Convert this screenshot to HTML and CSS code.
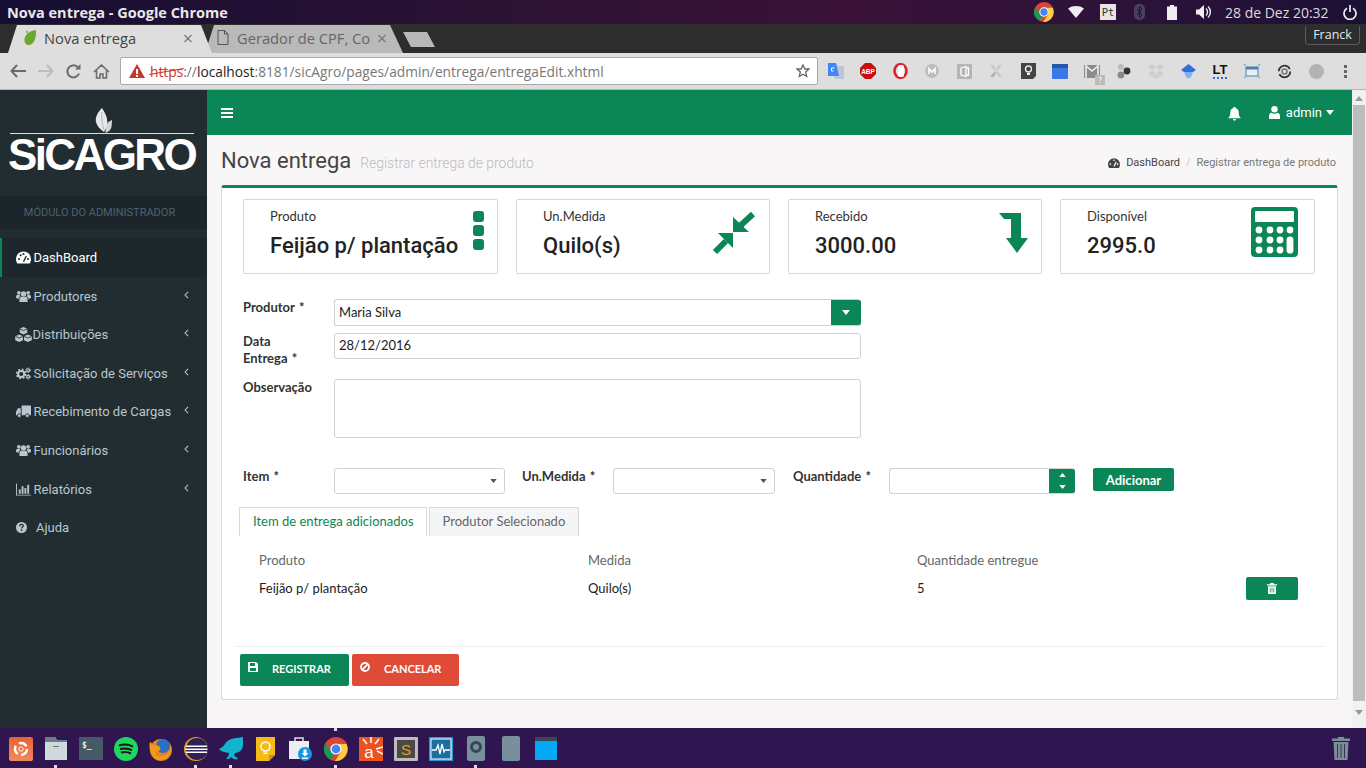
FILE: index.html
```html
<!DOCTYPE html>
<html lang="pt-BR">
<head>
    <meta charset="UTF-8">
    <title>Nova entrega - Google Chrome</title>
    <link rel="stylesheet" href="styles.css">
</head>
<body>
    <svg class="defs" width="0" height="0">
        <defs>
            <symbol id="chrome" viewBox="0 0 24 24">
                <circle cx="12" cy="12" r="12" fill="#db4437"/>
                <path d="M1.600 6 7 15l5 0-5.500 7.600A12 12 0 0 1 1.600 6z" fill="#0f9d58"/>
                <path d="M12 7h10.400A12 12 0 0 1 11 24l6-9z" fill="#ffcd40"/>
                <circle cx="12" cy="12" r="5.600" fill="#fff"/>
                <circle cx="12" cy="12" r="4.400" fill="#4285f4"/>
            </symbol>
            <symbol id="users" viewBox="0 0 16 14">
                <circle cx="8" cy="4.200" r="2.900"/>
                <circle cx="3" cy="3" r="2"/>
                <circle cx="13" cy="3" r="2"/>
                <path d="M3.600 13V9.600C3.600 8 4.800 7.200 6 7.200h4c1.200 0 2.400.8 2.400 2.400V13z"/>
                <path d="M0 8.700V6.700C0 5.700.8 5.300 1.500 5.300h2.300c.3.900.8 1.300 1.200 1.500-1.500.4-2.200 1.500-2.300 2.800zM16 8.700V6.700c0-1-.8-1.400-1.500-1.400h-2.300c-.3.900-.8 1.300-1.200 1.500 1.500.4 2.200 1.500 2.300 2.800z"/>
            </symbol>
            <symbol id="caret" viewBox="0 0 8 5">
                <path d="M0 0h8L4 5z"/>
            </symbol>
            <symbol id="chev" viewBox="0 0 6 10">
                <path d="M5 1 1.200 5 5 9" fill="none" stroke="currentColor" stroke-width="1.300"/>
            </symbol>
        </defs>
    </svg>

    <!-- Barra do Ubuntu -->
    <div class="topbar">
        <span class="win-title">Nova entrega - Google Chrome</span>
        <div class="tray">
            <span class="tc"><svg width="20" height="20"><use href="#chrome"/></svg></span>
            <span class="tc"><svg width="16" height="12" viewBox="0 0 16 12"><path d="M0 2.500C4.500-.8 11.500-.8 16 2.500L8 12z" fill="#eee"/></svg></span>
            <span class="tc"><span class="tray-pt">Pt</span></span>
            <span class="tc"><svg width="12" height="16" viewBox="0 0 12 16"><rect width="11" height="16" rx="5" fill="#4b3f5c"/><path d="M3 5l5 6-2.500 2.500v-11L8 5l-5 6" fill="none" stroke="#1e1430"/></svg></span>
            <span class="tc"><svg width="10" height="15" viewBox="0 0 10 15"><path d="M3 0h4v1.500h3V15H0V1.500h3z" fill="#eee"/></svg></span>
            <span class="tc"><svg width="16" height="14" viewBox="0 0 16 14"><path d="M0 4.500h3L8 0v14L3 9.500H0z" fill="#eee"/><path d="M10 3.500c2 1.800 2 5.200 0 7M12 1.500c3.200 3 3.200 8 0 11" fill="none" stroke="#eee" stroke-width="1.400"/></svg></span>
            <span class="clock">28 de Dez 20:32</span>
            <svg width="14" height="15" viewBox="0 0 14 15"><path d="M4 3.200a6 6 0 1 0 6 0M7 0v7" fill="none" stroke="#eee" stroke-width="1.700"/></svg>
        </div>
    </div>

    <!-- Abas do navegador -->
    <div class="tabstrip">
        <div class="btab btab-on">
            <svg width="15" height="17" viewBox="0 0 15 17"><path d="M13 1C6 2 1 6 1.500 12c.2 2.500 2.500 4.500 5 4 5-1 7-8 6.500-15z" fill="#6aa82e"/><circle cx="4" cy="3" r="1.400" fill="#8cc152"/></svg>
            <span class="btab-name">Nova entrega</span>
            <span class="btab-x">×</span>
        </div>
        <div class="btab btab-off">
            <svg width="12" height="15" viewBox="0 0 12 15"><path d="M1 .5h6.500L11 4v10.500H1zM7.500.5V4H11" fill="none" stroke="#555"/></svg>
            <span class="btab-name">Gerador de CPF, Co</span>
            <span class="btab-x">×</span>
        </div>
        <div class="btab-new"></div>
        <div class="profile">Franck</div>
    </div>

    <!-- Barra de endereco -->
    <div class="toolbar">
        <div class="nav-btns">
            <svg width="16" height="14" viewBox="0 0 16 14"><path d="M7 1 1.500 7 7 13M2 7h14" fill="none" stroke="#6b6b6b" stroke-width="2"/></svg>
            <svg width="16" height="14" viewBox="0 0 16 14"><path d="M9 1l5.500 6L9 13M14 7H0" fill="none" stroke="#bdbdbd" stroke-width="2"/></svg>
            <svg width="15" height="15" viewBox="0 0 15 15"><path d="M13 9.500A6 6 0 1 1 11.500 3" fill="none" stroke="#6b6b6b" stroke-width="2"/><path d="M9 5.500h5.500V0z" fill="#6b6b6b"/></svg>
            <svg width="17" height="15" viewBox="0 0 17 15"><path d="M1 8l7.500-7L16 8M3.500 6.500V14H7v-4h3v4h3.500V6.500" fill="none" stroke="#6b6b6b" stroke-width="1.600"/></svg>
        </div>
        <div class="omnibox">
            <svg width="16" height="14" viewBox="0 0 16 14"><path d="M8 0l8 14H0z" fill="#c5372c"/><path d="M7 5h2v5H7zM7 11h2v2H7z" fill="#fff"/></svg>
            <span class="url"><span class="url-https">https</span><span class="url-dim">://</span>localhost<span class="url-dim">:8181/sicAgro/pages/admin/entrega/entregaEdit.xhtml</span></span>
            <svg class="star" width="14" height="14" viewBox="0 0 14 14"><path d="M7 1l1.800 4H13L9.700 8l1 4.500L7 10.200 3.300 12.500l1-4.500L1 5h4.200z" fill="none" stroke="#666" stroke-width="1.300"/></svg>
        </div>
        <div class="exts">
            <span class="ext"><svg width="16" height="16" viewBox="0 0 16 16"><path d="M0 0h8l2 3h6v13H7l-1-3H0z" fill="#bcc6d6"/><path d="M0 0h8l3 13H0z" fill="#4285f4"/><path d="M6.500 5H3.500v3h2" fill="none" stroke="#fff"/></svg></span>
            <span class="ext"><svg width="16" height="16" viewBox="0 0 16 16"><path d="M5 0h6l5 5v6l-5 5H5l-5-5V5z" fill="#c70d0d"/><text x="8" y="10.500" class="ext-abp">ABP</text></svg></span>
            <span class="ext"><svg width="15" height="16" viewBox="0 0 15 16"><ellipse cx="7.500" cy="8" rx="6" ry="6.800" fill="none" stroke="#e2202c" stroke-width="2.600"/><rect x="5" y="2" width="6" height="12" rx="2" fill="#fff"/></svg></span>
            <span class="ext"><svg width="14" height="14" viewBox="0 0 14 14"><circle cx="7" cy="7" r="7" fill="#bdbdbd"/><path d="M4 10V4.500L7 8l3-3.500V10" fill="none" stroke="#fff" stroke-width="1.500"/></svg></span>
            <span class="ext"><svg width="15" height="15" viewBox="0 0 15 15"><rect width="15" height="15" fill="#b5b5b5"/><path d="M4 4l5-1.500v10L4 11zM9 4h2.500v7H9" fill="none" stroke="#fff" stroke-width="1.300"/></svg></span>
            <span class="ext"><svg width="14" height="14" viewBox="0 0 14 14"><path d="M1 1h3.500l9 12H10zM13 1H9.500L6 5.500 8 8z" fill="#c9c9c9"/><path d="M1 13h3.500L7 9.500 5.500 7.500z" fill="#b0b0b0"/></svg></span>
            <span class="ext"><svg width="15" height="16" viewBox="0 0 15 16"><path d="M0 0h15v13l-3 3H0z" fill="#444"/><circle cx="7.500" cy="6" r="3" fill="none" stroke="#eee" stroke-width="1.300"/><path d="M6 10h3v2H6z" fill="#eee"/></svg></span>
            <span class="ext"><svg width="16" height="15" viewBox="0 0 16 15"><rect width="16" height="15" rx="1" fill="#3b78e7"/><rect width="16" height="4" fill="#2a56a8"/></svg></span>
            <span class="ext ext-mail"><svg width="16" height="13" viewBox="0 0 16 13"><rect width="16" height="13" fill="#8b8b8b"/><path d="M2 0v13M14 0v13M2 1l6 5 6-5" fill="none" stroke="#f2f2f2" stroke-width="1.500"/></svg><span class="ext-q">?</span></span>
            <span class="ext"><svg width="14" height="15" viewBox="0 0 14 15"><circle cx="4" cy="3" r="3" fill="#bbb"/><circle cx="4" cy="11" r="3.400" fill="#888"/><circle cx="10" cy="7" r="3.400" fill="#333"/></svg></span>
            <span class="ext"><svg width="16" height="15" viewBox="0 0 16 15"><path d="M4 0 8 3 4 6 0 3zM12 0l4 3-4 3-4-3zM4 6.500l4 3-4 3-4-3zM12 6.500l4 3-4 3-4-3zM4 13l4-2.500 4 2.500-4 2z" fill="#cdcdcd"/></svg></span>
            <span class="ext"><svg width="15" height="15" viewBox="0 0 15 15"><path d="M7.500 0 15 6l-3 2H3L0 6z" fill="#2f6fd8"/><path d="M3 8h9l-2 5-2.500 1.500L5 13z" fill="#7fb1f0"/></svg></span>
            <span class="ext ext-lt">LT<i class="ext-wave"></i></span>
            <span class="ext"><svg width="16" height="14" viewBox="0 0 16 14"><rect x="2" y="3" width="12" height="9" fill="#e8eef6" stroke="#4a7fb5"/><rect x="2" y="3" width="12" height="2.500" fill="#4a7fb5"/><path d="M0 2V0h2M14 0h2v2M0 12v2h2M14 14h2v-2" fill="none" stroke="#4a90d0"/></svg></span>
            <span class="ext"><svg width="15" height="15" viewBox="0 0 15 15"><circle cx="7.500" cy="7.500" r="5.800" fill="none" stroke="#333" stroke-width="1.800" stroke-dasharray="15 3"/><circle cx="7.500" cy="7.500" r="2.500" fill="none" stroke="#777" stroke-width="1.500"/></svg></span>
            <span class="ext"><svg width="15" height="15" viewBox="0 0 15 15"><circle cx="7.500" cy="7.500" r="7.500" fill="#b3b3b3"/></svg></span>
            <span class="ext-dots"><i></i><i></i><i></i></span>
        </div>
    </div>

    <!-- Aplicacao -->
    <div class="app">
        <aside class="sidebar">
            <div class="logo">
                <svg class="logo-leaf" width="18" height="25" viewBox="0 0 18 25">
                    <path d="M7 0C3 4 0 9 1 14c.8 4 4 7 8 10 3-4 4-9 3-13C11.300 7 9 3 7 0z" fill="#e8e8e8"/>
                    <path d="M7 4C6 9 7 16 9 22" fill="none" stroke="#aaa" stroke-width=".8"/>
                    <path d="M17 12c-3 1-5 3-6 6l-.5 7c3-1 5.500-3 6-6 .3-2.500.5-5 .5-7z" fill="#d4d4d4"/>
                </svg>
                <div class="logo-line"></div>
                <div class="logo-name">SiCAGRO</div>
            </div>
            <div class="side-head">MÓDULO DO ADMINISTRADOR</div>
            <ul class="menu">
                <li class="menu-item is-active">
                    <svg class="mi" viewBox="0 0 16 13"><path d="M8 0a8 8 0 0 0-8 8c0 1.800.5 3.500 1.400 5h13.200c.9-1.500 1.400-3.200 1.400-5a8 8 0 0 0-8-8z" fill="#fff"/><circle cx="3.200" cy="8" r="1.100" fill="#1e282c"/><circle cx="5" cy="4.200" r="1.100" fill="#1e282c"/><circle cx="8" cy="2.800" r="1.100" fill="#1e282c"/><circle cx="12.800" cy="8" r="1.100" fill="#1e282c"/><path d="M8 11l3-6" stroke="#1e282c" stroke-width="1.500"/></svg>
                    <span>DashBoard</span>
                </li>
                <li class="menu-item">
                    <svg class="mi"><use href="#users"/></svg>
                    <span>Produtores</span>
                    <svg class="chev"><use href="#chev"/></svg>
                </li>
                <li class="menu-item">
                    <svg class="mi mi-cubes" viewBox="0 0 16 14"><path d="M8 0l3.500 1.500v3.800L8 7 4.500 5.300V1.500zM4 7l3.500 1.600v3.800L4 14 .2 12.400V8.600zM12 7l3.800 1.600v3.800L12 14l-3.500-1.600V8.600z"/><path d="M4.500 1.800 8 3.300l3.500-1.500M.5 8.800 4 10.300l3.500-1.500M8.500 8.800l3.500 1.500 3.500-1.500" fill="none" stroke="#222d32" stroke-width=".8"/></svg>
                    <span>Distribuições</span>
                    <svg class="chev"><use href="#chev"/></svg>
                </li>
                <li class="menu-item">
                    <svg class="mi" viewBox="0 0 16 14"><circle cx="5.500" cy="7.500" r="3.300" fill="none" stroke="currentColor" stroke-width="2.200"/><circle cx="5.500" cy="7.500" r="4.900" fill="none" stroke="currentColor" stroke-width="1.800" stroke-dasharray="2 1.850"/><circle cx="13" cy="3.500" r="1.500" fill="none" stroke="currentColor" stroke-width="1.300"/><circle cx="13" cy="3.500" r="2.500" fill="none" stroke="currentColor" stroke-width="1" stroke-dasharray="1.300 1.300"/><circle cx="13" cy="10.500" r="1.500" fill="none" stroke="currentColor" stroke-width="1.300"/><circle cx="13" cy="10.500" r="2.500" fill="none" stroke="currentColor" stroke-width="1" stroke-dasharray="1.300 1.300"/></svg>
                    <span>Solicitação de Serviços</span>
                    <svg class="chev"><use href="#chev"/></svg>
                </li>
                <li class="menu-item">
                    <svg class="mi" viewBox="0 0 16 13"><path d="M6 0h10v10.500H6zM5 3v7.500H0V7l2-4z"/><circle cx="3.500" cy="11" r="2" stroke="#222d32"/><circle cx="12" cy="11" r="2" stroke="#222d32"/></svg>
                    <span>Recebimento de Cargas</span>
                    <svg class="chev"><use href="#chev"/></svg>
                </li>
                <li class="menu-item">
                    <svg class="mi"><use href="#users"/></svg>
                    <span>Funcionários</span>
                    <svg class="chev"><use href="#chev"/></svg>
                </li>
                <li class="menu-item">
                    <svg class="mi" viewBox="0 0 16 13"><path d="M0 0h1v12h15v1H0z"/><path d="M3 6.500h2V11H3zM6 3h2v8H6zM9 5h2v6H9zM12 1.500h2V11h-2z"/></svg>
                    <span>Relatórios</span>
                    <svg class="chev"><use href="#chev"/></svg>
                </li>
                <li class="menu-item menu-help">
                    <svg class="mi mi-help" viewBox="0 0 12 12"><circle cx="6" cy="6" r="6"/><path d="M4 4.500C4 3 5 2.500 6 2.500s2 .6 2 1.800C8 5.500 6.100 5.500 6.100 7" fill="none" stroke="#222d32" stroke-width="1.400"/><path d="M5.200 8.100h1.700v1.600H5.200z" fill="#222d32"/></svg>
                    <span>Ajuda</span>
                </li>
            </ul>
        </aside>

        <main class="main">
            <header class="appbar">
                <svg class="burger" width="12" height="10" viewBox="0 0 12 10"><path d="M0 0h12v2H0zM0 4h12v2H0zM0 8h12v2H0z" fill="#fff"/></svg>
                <div class="appbar-right">
                    <svg class="bell" width="13" height="14" viewBox="0 0 13 14"><path d="M6.500 0C8 0 8 1 8 1.300c2 .6 2.700 2.300 2.700 4.200 0 3 .8 4.500 2.300 5.800H0c1.500-1.300 2.300-2.800 2.300-5.800 0-1.900.7-3.600 2.700-4.200C5 1 5 0 6.500 0zM5 12h3a1.500 1.800 0 0 1-3 0z" fill="#fff"/></svg>
                    <div class="user">
                        <svg width="11" height="13" viewBox="0 0 11 13"><circle cx="5.500" cy="3.200" r="3.200" fill="#fff"/><path d="M0 13v-3c0-2 1.200-3.300 2.500-3.300 1 .7 2 1 3 1s2-.3 3-1C9.800 6.700 11 8 11 10v3z" fill="#fff"/></svg>
                        <span>admin</span>
                        <svg class="user-caret" width="8" height="5"><use href="#caret"/></svg>
                    </div>
                </div>
            </header>

            <div class="page">
                <div class="page-head">
                    <h1>Nova entrega</h1>
                    <small>Registrar entrega de produto</small>
                    <div class="crumbs">
                        <svg width="12" height="10" viewBox="0 0 16 13"><path d="M8 0a8 8 0 0 0-8 8c0 1.800.5 3.500 1.400 5h13.200c.9-1.500 1.400-3.200 1.400-5a8 8 0 0 0-8-8z" fill="#444"/><circle cx="3.200" cy="8" r="1.100" fill="#f9f6f8"/><circle cx="8" cy="2.800" r="1.100" fill="#f9f6f8"/><circle cx="12.800" cy="8" r="1.100" fill="#f9f6f8"/><path d="M8 11l3-6" stroke="#f9f6f8" stroke-width="1.500"/></svg>
                        <span class="crumb-link">DashBoard</span>
                        <span class="crumb-sep">/</span>
                        <span class="crumb-now">Registrar entrega de produto</span>
                    </div>
                </div>

                <section class="box">
                    <div class="infos">
                        <div class="info">
                            <div class="info-text"><div class="info-label">Produto</div><div class="info-value">Feijão p/ plantação</div></div>
                            <svg class="info-dots" width="11" height="39" viewBox="0 0 11 39"><rect width="11" height="11" rx="3"/><rect y="14" width="11" height="11" rx="3"/><rect y="28" width="11" height="11" rx="3"/></svg>
                        </div>
                        <div class="info">
                            <div class="info-text"><div class="info-label">Un.Medida</div><div class="info-value">Quilo(s)</div></div>
                            <svg class="info-ic" width="44" height="44" viewBox="0 0 44 44"><path d="M21 6v15h16zM6 22h15v15z"/><path d="M28 15 41 3M14 30 3 41" stroke="#0b8656" stroke-width="6"/></svg>
                        </div>
                        <div class="info">
                            <div class="info-text"><div class="info-label">Recebido</div><div class="info-value">3000.00</div></div>
                            <svg class="info-ic info-down" width="30" height="40" viewBox="0 0 30 40"><path d="M0 0h22v25h7L18 40 7 25h5V6H5z"/></svg>
                        </div>
                        <div class="info">
                            <div class="info-text"><div class="info-label">Disponível</div><div class="info-value">2995.0</div></div>
                            <svg class="info-ic info-calc" width="47" height="50" viewBox="0 0 47 50">
                                <rect width="47" height="50" rx="4"/>
                                <rect x="4" y="4" width="39" height="11" rx="1" fill="#fff"/>
                                <g fill="#fff">
                                    <circle cx="8" cy="23" r="3.400"/><circle cx="19" cy="23" r="3.400"/><circle cx="29" cy="23" r="3.400"/><circle cx="39" cy="23" r="3.400"/>
                                    <circle cx="8" cy="33" r="3.400"/><circle cx="19" cy="33" r="3.400"/><circle cx="29" cy="33" r="3.400"/>
                                    <circle cx="8" cy="43" r="3.400"/><circle cx="19" cy="43" r="3.400"/><circle cx="29" cy="43" r="3.400"/>
                                    <rect x="35.600" y="29.600" width="6.800" height="17" rx="3.400"/>
                                </g>
                            </svg>
                        </div>
                    </div>

                    <div class="row row-produtor">
                        <label class="lbl">Produtor &nbsp;*</label>
                        <div class="combo">
                            <span class="combo-text">Maria Silva</span>
                            <span class="combo-btn"><svg width="8" height="5"><use href="#caret"/></svg></span>
                        </div>
                    </div>
                    <div class="row row-data">
                        <label class="lbl">Data<br>Entrega &nbsp;*</label>
                        <input class="field" type="text" value="28/12/2016">
                    </div>
                    <div class="row row-obs">
                        <label class="lbl">Observação</label>
                        <textarea class="field field-area"></textarea>
                    </div>

                    <div class="row row-item">
                        <label class="lbl lbl-item">Item &nbsp;*</label>
                        <div class="sel sel-item"><svg width="7" height="4"><use href="#caret"/></svg></div>
                        <label class="lbl lbl-un">Un.Medida &nbsp;*</label>
                        <div class="sel sel-un"><svg width="7" height="4"><use href="#caret"/></svg></div>
                        <label class="lbl lbl-qtd">Quantidade &nbsp;*</label>
                        <div class="spin">
                            <div class="spin-btn">
                                <svg width="7" height="4" class="flip"><use href="#caret"/></svg>
                                <svg width="7" height="4"><use href="#caret"/></svg>
                            </div>
                        </div>
                        <button class="btn-add">Adicionar</button>
                    </div>

                    <div class="tabs">
                        <div class="tab tab-on">Item de entrega adicionados</div>
                        <div class="tab">Produtor Selecionado</div>
                    </div>
                    <table class="items">
                        <thead>
                            <tr><th>Produto</th><th>Medida</th><th>Quantidade entregue</th><th></th></tr>
                        </thead>
                        <tbody>
                            <tr>
                                <td>Feijão p/ plantação</td>
                                <td>Quilo(s)</td>
                                <td>5</td>
                                <td>
                                    <button class="btn-del"><svg width="10" height="11" viewBox="0 0 10 11"><path d="M3.500 0h3l.7 1.200H10v1.300H0V1.200h2.800zM1 3.200h8V10c0 .6-.4 1-1 1H2c-.6 0-1-.4-1-1z" fill="#fff"/><path d="M3.200 4.500v5M5 4.500v5M6.800 4.500v5" stroke="#0b8656" stroke-width=".7"/></svg></button>
                                </td>
                            </tr>
                        </tbody>
                    </table>

                    <div class="actions">
                        <button class="act act-save">
                            <svg width="10" height="10" viewBox="0 0 10 10"><path d="M0 0h8l2 2v8H0zM2 1v3h5V1zM2 6v3h6V6z" fill="#fff" fill-rule="evenodd"/></svg>
                            REGISTRAR
                        </button>
                        <button class="act act-cancel">
                            <svg width="10" height="10" viewBox="0 0 10 10"><circle cx="5" cy="5" r="4" fill="none" stroke="#fff" stroke-width="1.800"/><path d="M2.200 7.800l5.600-5.600" stroke="#fff" stroke-width="1.800"/></svg>
                            CANCELAR
                        </button>
                    </div>
                </section>
            </div>
        </main>

        <div class="scrollbar">
            <svg width="8" height="5" class="sb-up"><use href="#caret"/></svg>
            <div class="sb-thumb"></div>
            <svg width="8" height="5"><use href="#caret"/></svg>
        </div>
    </div>

    <!-- Lancador do Ubuntu -->
    <div class="dock">
        <span class="dk"><svg width="24" height="24" viewBox="0 0 24 24"><defs><linearGradient id="ubu" x1="0" y1="0" x2="0" y2="1"><stop offset="0" stop-color="#e8622f"/><stop offset="1" stop-color="#f08a5d"/></linearGradient></defs><rect width="24" height="24" rx="2" fill="url(#ubu)"/><circle cx="12" cy="12" r="6" fill="none" stroke="#fff" stroke-width="2.400" stroke-dasharray="9 3.600"/><circle cx="12" cy="12" r="2.200" fill="none" stroke="#fff"/></svg></span>
        <span class="dk dk-run"><svg width="24" height="23" viewBox="0 0 24 23"><path d="M1 0h10l2 3h10v20H1z" fill="#cfd8dc"/><path d="M1 0h10l2 3h10v2H1z" fill="#6b7c85"/><path d="M9 9h6v1H9z" fill="#607d8b"/></svg></span>
        <span class="dk"><svg width="24" height="23" viewBox="0 0 24 23"><rect width="24" height="23" rx="1" fill="#455a64"/><text x="3" y="11" class="dk-term">$_</text></svg></span>
        <span class="dk"><svg width="24" height="24" viewBox="0 0 24 24"><circle cx="12" cy="12" r="12" fill="#1ed760"/><path d="M5 8.500c5-1.500 10-1 14 1.200M6 12c4-1 8.500-.7 12 1.200M7 15.500c3.500-.8 7-.5 10 1" fill="none" stroke="#16181a" stroke-width="2"/></svg></span>
        <span class="dk"><svg width="24" height="24" viewBox="0 0 24 24"><circle cx="12" cy="13" r="11" fill="#e8831f"/><circle cx="14" cy="9" r="7" fill="#2a6fc4"/><path d="M1 5c2 1 3 2 3 4 2-1 5-1 7 1 1 2 0 4-2 4-3 0-4 3-1 5 3 1 8 1 12-4 1-2 2-6 1-8 2 6 0 15-9 16C3 24-1 12 1 5z" fill="#f39a1d"/></svg></span>
        <span class="dk dk-run"><svg width="24" height="24" viewBox="0 0 24 24"><circle cx="12" cy="12" r="12" fill="#e89b1c"/><circle cx="13" cy="12" r="11" fill="#2c2255"/><path d="M2 8.500h21v1.500H2zM1.500 11.500h22V13h-22zM2 14.500h21V16H2z" fill="#fff"/></svg></span>
        <span class="dk dk-run"><svg width="24" height="23" viewBox="0 0 24 23"><path d="M24 0v8c0 5-4 8-8 8l-1 3c2 0 3 2 4 3-3 1-5 0-7-2-1 2-3 2-5 2 1-1 3-3 3-6C6 15 2 15 0 12c2-1 4-2 6-5 2-4 8-6 12-6z" fill="#12b5cb"/></svg></span>
        <span class="dk"><svg width="19" height="24" viewBox="0 0 19 24"><path d="M0 0h19v18l-6 6H0z" fill="#f5ba15"/><path d="M19 18h-6v6z" fill="#c79412"/><circle cx="9.500" cy="9.500" r="4.500" fill="none" stroke="#fff" stroke-width="1.500"/><path d="M7.500 15.500h4v1.500h-4z" fill="#fff"/></svg></span>
        <span class="dk"><svg width="24" height="24" viewBox="0 0 24 24"><path d="M0 4h20v18H0z" fill="#eceff1"/><path d="M6 4V1h8v3" fill="none" stroke="#ddd" stroke-width="1.500"/><circle cx="16" cy="17" r="7" fill="#1596e4"/><path d="M14.500 12.500h3V16h2L16 19.500 12.500 16h2zM13 20.500h6V22h-6z" fill="#fff"/></svg></span>
        <span class="dk dk-run dk-top"><svg width="24" height="24"><use href="#chrome"/></svg></span>
        <span class="dk"><svg width="24" height="24" viewBox="0 0 24 24"><rect width="24" height="24" fill="#e95420"/><text x="10" y="21" class="dk-a">a</text><path d="M12 0v6M4 2l4 5M20 2l-4 5M24 10l-7 2M24 17l-6-3" stroke="#fff" stroke-width="1.500"/></svg></span>
        <span class="dk"><svg width="24" height="24" viewBox="0 0 24 24"><rect width="24" height="24" rx="1" fill="#bdbdbd"/><rect x="3" y="3" width="18" height="18" fill="#4a4a4a"/><text x="12" y="18" class="dk-s">S</text></svg></span>
        <span class="dk"><svg width="24" height="24" viewBox="0 0 24 24"><rect width="24" height="24" fill="#1f9ad6"/><rect x="2" y="2" width="20" height="20" fill="#1b6f9c" stroke="#fff"/><path d="M3 13h4l2-5 2 9 2-10 2 8 1-2h5" fill="none" stroke="#fff" stroke-width="1.300"/></svg></span>
        <span class="dk dk-run"><svg width="18" height="25" viewBox="0 0 18 25"><rect width="18" height="25" rx="2" fill="#78909c"/><circle cx="9" cy="11" r="4.500" fill="none" stroke="#37474f" stroke-width="3"/></svg></span>
        <span class="dk"><svg width="18" height="25" viewBox="0 0 18 25"><rect width="18" height="25" rx="2" fill="#78909c"/></svg></span>
        <span class="dk"><svg width="22" height="23" viewBox="0 0 22 23"><rect width="22" height="23" fill="#03a9f4"/><rect width="22" height="4" fill="#37474f"/></svg></span>
        <span class="dk dk-trash"><svg width="18" height="23" viewBox="0 0 18 23"><path d="M6 0h6v1.500h6V4H0V1.500h6zM1.500 5h15l-1 18H2.500z" fill="#7b8d96"/><path d="M5.500 7v14M9 7v14M12.500 7v14" stroke="#2f1650" stroke-width=".8"/></svg></span>
    </div>
</body>
</html>
```

FILE: styles.css
```css
* {
    box-sizing: border-box;
}
html, body {
    height: 100%;
    margin: 0;
    overflow: hidden;
}
body {
    display: flex;
    flex-direction: column;
    width: 1366px;
    height: 768px;
    font-family: Lato, sans-serif;
    font-size: 13px;
    color: #222;
}
.defs {
    position: absolute;
}

/* Ubuntu top bar */
.topbar {
    display: flex;
    align-items: center;
    justify-content: space-between;
    flex: 0 0 24px;
    padding: 0 9px 0 7px;
    background: linear-gradient(90deg, #170e33 0%, #2a1233 35%, #3b1238 62%, #2a1238 85%, #1c1035 100%);
    color: #e8e8e8;
}
.win-title {
    font-family: "Open Sans", sans-serif;
    font-size: 14.500px;
    font-weight: 700;
}
.tray {
    display: flex;
    align-items: center;
}
.tc {
    display: flex;
    align-items: center;
    justify-content: center;
    width: 32px;
}
.tray-pt {
    width: 16px;
    height: 16px;
    background: #e6e6e6;
    color: #333;
    font-family: "DejaVu Sans Mono", monospace;
    font-size: 10.500px;
    line-height: 16px;
    text-align: center;
}
.clock {
    width: 104px;
    margin: 0 14px 0 5px;
    font-family: "Open Sans", sans-serif;
    font-size: 14px;
    color: #dcdcdc;
    white-space: nowrap;
}

/* Chrome tabs */
.tabstrip {
    display: flex;
    align-items: flex-end;
    flex: 0 0 29px;
    padding-left: 8px;
    background: #2d2d2d;
}
.btab {
    display: flex;
    align-items: center;
    height: 28px;
    padding-bottom: 3px;
    font-family: "Open Sans", sans-serif;
    font-size: 14.700px;
}
.btab-on {
    position: relative;
    z-index: 1;
    width: 204px;
    margin-right: -7px;
    padding-left: 15px;
    padding-right: 19px;
    background: #dedede;
    color: #444;
    clip-path: polygon(0 100%, 9px 0, 193px 0, 100% 100%);
}
.btab-off {
    width: 198px;
    padding-left: 12px;
    padding-right: 16px;
    background: #b9b9b9;
    color: #666;
    clip-path: polygon(0 100%, 9px 0, 185px 0, 100% 100%);
}
.btab-name {
    flex: 1;
    margin-left: 6px;
    overflow: hidden;
    white-space: nowrap;
}
.btab-off .btab-name {
    margin-left: 8px;
}
.btab-x {
    font-size: 18px;
    line-height: 1;
    color: #777;
}
.btab-new {
    width: 32px;
    height: 15px;
    margin: 0 0 6px 0;
    background: #b8b8b8;
    clip-path: polygon(0 0, 24px 0, 100% 100%, 8px 100%);
}
.profile {
    align-self: flex-start;
    width: 55px;
    height: 19px;
    margin: 2px 6px 0 auto;
    border: 1px solid #5c5c5c;
    border-top: none;
    border-radius: 0 0 4px 4px;
    color: #e8e8e8;
    font-family: "Open Sans", sans-serif;
    font-size: 12.500px;
    line-height: 18px;
    text-align: center;
}

/* Chrome toolbar */
.toolbar {
    display: flex;
    align-items: center;
    flex: 0 0 37px;
    border-bottom: 1px solid #b5b5b5;
    background: #dedede;
}
.nav-btns {
    display: flex;
    align-items: center;
    gap: 12px;
    width: 120px;
    padding-left: 10px;
}
.omnibox {
    display: flex;
    align-items: center;
    width: 698px;
    height: 28px;
    padding: 0 7px 0 8px;
    border: 1px solid #a9a9a9;
    border-radius: 2px;
    background: #fff;
}
.url {
    flex: 1;
    margin-left: 5px;
    font-family: "Open Sans", sans-serif;
    font-size: 13.750px;
    color: #222;
    white-space: nowrap;
}
.url-https {
    position: relative;
    color: #c5372c;
}
.url-https::after {
    content: "";
    position: absolute;
    top: 50%;
    left: -1px;
    right: -1px;
    height: 1px;
    background: #c5372c;
    transform: rotate(-10deg);
}
.url-dim {
    color: #777;
}
.exts {
    display: flex;
    align-items: center;
    flex: 1;
    padding-left: 2px;
}
.ext {
    display: flex;
    align-items: center;
    justify-content: center;
    position: relative;
    width: 32px;
    height: 24px;
}
.ext-abp {
    fill: #fff;
    font-family: "Liberation Sans", sans-serif;
    font-size: 6.500px;
    font-weight: 700;
    text-anchor: middle;
}
.ext-q {
    position: absolute;
    right: 3px;
    bottom: -2px;
    width: 10px;
    height: 10px;
    background: #bbb;
    color: #fff;
    font-size: 8px;
    line-height: 10px;
    text-align: center;
}
.ext-lt {
    flex-direction: column;
    color: #111;
    font-family: "Liberation Sans", sans-serif;
    font-size: 13px;
    font-weight: 700;
    line-height: 12px;
}
.ext-wave {
    width: 14px;
    height: 3px;
    border-bottom: 2px dotted #2a6fd8;
}
.ext-dots {
    display: flex;
    flex-direction: column;
    gap: 2px;
    margin-left: 12px;
}
.ext-dots i {
    width: 3px;
    height: 3px;
    background: #666;
}

/* App shell */
.app {
    display: flex;
    flex: 0 0 638px;
    background: #f9f6f8;
}
.sidebar {
    flex: 0 0 207px;
    background: #222d32;
    color: #b8c7ce;
    font-family: Roboto, sans-serif;
}
.logo {
    display: flex;
    flex-direction: column;
    align-items: center;
    height: 106px;
    padding-top: 18px;
}
.logo-line {
    width: 184px;
    height: 1px;
    margin-left: -3px;
    background: #ddd;
}
.logo-name {
    align-self: flex-start;
    width: 186px;
    margin: 3px 0 0 8px;
    color: #fff;
    font-family: "Liberation Sans", sans-serif;
    font-size: 44px;
    font-weight: 700;
    letter-spacing: -2.600px;
    line-height: 36px;
    white-space: nowrap;
}
.side-head {
    height: 33px;
    padding-right: 8px;
    background: #1c2529;
    color: #4b6170;
    font-size: 11px;
    line-height: 33px;
    text-align: center;
}
.menu {
    margin: 9.300px 0 0;
    padding: 0;
    list-style: none;
}
.menu-item {
    display: flex;
    align-items: center;
    height: 38.600px;
    padding: 0 17px 0 16px;
    font-size: 13px;
}
.menu-item span {
    flex: 1;
}
.menu-item.is-active {
    border-left: 2px solid #0b8656;
    padding-left: 14px;
    background: #1e282c;
    color: #fff;
}
.mi {
    flex: none;
    width: 15px;
    height: 13px;
    margin-right: 2.500px;
    fill: currentColor;
}
.mi-cubes {
    width: 17px;
    height: 15px;
    margin: 0 .5px 0 -1px;
}
.mi-help {
    width: 11px;
    height: 11px;
    margin-right: 9px;
}
.chev {
    flex: none;
    width: 5px;
    height: 8px;
    margin: -3px 1px 0 0;
}
.menu-help {
    padding-left: 16px;
}

/* Main column */
.main {
    display: flex;
    flex-direction: column;
    flex: 0 0 1145px;
}
.appbar {
    display: flex;
    align-items: center;
    justify-content: space-between;
    flex: 0 0 45px;
    padding: 0 18px 0 14px;
    background: #0b8656;
    color: #fff;
}
.appbar-right {
    display: flex;
    align-items: center;
    gap: 28px;
}
.bell {
    margin-top: 2px;
}
.user {
    display: flex;
    align-items: center;
    gap: 6px;
    font-family: Roboto, sans-serif;
    font-size: 13px;
}
.user-caret {
    margin-left: -2px;
    fill: #fff;
}
.page {
    flex: 1;
    padding: 0 14px;
}
.page-head {
    display: flex;
    align-items: center;
    height: 50px;
    font-family: Roboto, sans-serif;
}
.page-head h1 {
    margin: 0;
    font-size: 22px;
    font-weight: 400;
    color: #444;
}
.page-head small {
    margin: 6px 0 0 9px;
    font-size: 13.900px;
    font-weight: 300;
    color: #bbb;
}
.crumbs {
    display: flex;
    align-items: center;
    gap: 6px;
    margin: 5px 2px 0 auto;
    font-size: 11px;
    color: #666;
}
.crumb-link {
    color: #444;
}
.crumb-sep {
    color: #ccc;
}
.crumb-now {
    color: #777;
}

/* Box */
.box {
    width: 1117px;
    height: 515px;
    padding: 11px 22px 0 21px;
    border: 1px solid #d9d9d9;
    border-top: 3px solid #0b8656;
    border-radius: 3px;
    background: #fff;
}
.infos {
    display: grid;
    grid-template-columns: 255px 254px 254px 255px;
    gap: 18px;
    margin-bottom: 25px;
}
.info {
    display: flex;
    justify-content: space-between;
    height: 75px;
    padding: 8px 13px 0 26px;
    border: 1px solid #d6d6d6;
    border-radius: 2px;
}
.info-label {
    font-size: 13px;
    line-height: 17px;
    color: #333;
}
.info-value {
    margin-top: 6px;
    font-family: Roboto, sans-serif;
    font-size: 22px;
    font-weight: 500;
    line-height: 30px;
    color: #222;
    white-space: nowrap;
}
.info svg {
    flex: none;
    fill: #0b8656;
}
.info-dots {
    margin: 3px 0 0 -15px;
}
.info-ic {
    margin-top: 3px;
}
.info-down {
    margin: 5px -1px 0 0;
}
.info-calc {
    margin: -1px 3px 0 0;
}

/* Form */
.row {
    display: flex;
    align-items: flex-start;
}
.lbl {
    flex: 0 0 91px;
    font-weight: 700;
    font-size: 13px;
    line-height: 17px;
    word-spacing: -1px;
    color: #333;
}
.combo, .field {
    width: 527px;
    border: 1px solid #d2d2d2;
    border-radius: 3px;
    background: #fff;
    font-family: Lato, sans-serif;
    font-size: 13px;
    color: #222;
}
.combo {
    display: flex;
    align-items: center;
    justify-content: space-between;
    height: 27px;
    padding-left: 4px;
    border-right: none;
    overflow: hidden;
}
.combo-text {
    margin-bottom: 2px;
}
.combo-btn {
    display: flex;
    align-items: center;
    justify-content: center;
    width: 30px;
    height: 27px;
    background: #0b8656;
    fill: #fff;
}
.field {
    display: block;
    height: 26px;
    padding: 0 4px 2px;
    outline: none;
}
.field-area {
    height: 59px;
    resize: none;
}
.row-produtor {
    height: 27px;
}
.row-data {
    height: 39px;
    margin-top: 7px;
}
.row-obs {
    height: 59px;
    margin-top: 7px;
}
.row-item {
    height: 26px;
    margin-top: 30px;
}
.lbl-un {
    flex: 0 0 91px;
    margin-left: 17px;
}
.lbl-qtd {
    flex: 0 0 96px;
    margin-left: 18px;
}
.sel, .spin {
    display: flex;
    height: 26px;
    border: 1px solid #d2d2d2;
    border-radius: 3px;
    background: #fff;
}
.sel {
    align-items: center;
    justify-content: flex-end;
    padding-right: 7px;
    fill: #555;
}
.sel-item {
    width: 171px;
}
.sel-un {
    width: 162px;
}
.spin {
    justify-content: flex-end;
    width: 186px;
    border-right: none;
    overflow: hidden;
}
.spin-btn {
    display: flex;
    flex-direction: column;
    align-items: center;
    justify-content: space-between;
    width: 26px;
    padding: 4px 0;
    background: #0b8656;
    fill: #fff;
}
.flip {
    transform: rotate(180deg);
}
.btn-add {
    width: 81px;
    height: 23px;
    margin-left: 18px;
    padding: 0;
    border: none;
    border-radius: 2px;
    background: #0b8656;
    color: #fff;
    font-family: Lato, sans-serif;
    font-size: 13px;
    font-weight: 700;
}

/* Tabs and table */
.tabs {
    display: flex;
    gap: 2px;
    height: 29px;
    margin: 13px 0 0 -4px;
}
.tab {
    padding: 0 13px;
    border: 1px solid #d9d9d9;
    border-bottom: none;
    background: #f4f5f7;
    color: #666;
    font-size: 13px;
    line-height: 27px;
}
.tab-on {
    padding: 0 12px 0 13px;
    background: #fff;
    color: #0b8656;
}
.items {
    width: 1059px;
    margin: 9px 0 0 -4px;
    border-collapse: collapse;
    font-size: 13px;
}
.items th {
    width: 329px;
    height: 30px;
    padding: 0 0 0 20px;
    font-weight: 400;
    color: #666;
    text-align: left;
}
.items th:last-child {
    width: 72px;
}
.items td {
    height: 26px;
    padding: 0 0 0 20px;
}
.btn-del {
    display: flex;
    align-items: center;
    justify-content: center;
    width: 52px;
    height: 23px;
    padding: 0;
    border: none;
    border-radius: 2px;
    background: #0b8656;
}

/* Footer actions */
.actions {
    display: flex;
    gap: 3px;
    width: 1090px;
    margin: 45px 0 0 -8px;
    padding: 7px 0 0 5px;
    border-top: 1px solid #eee;
}
.act {
    display: flex;
    align-items: center;
    height: 32px;
    padding: 0 0 4px 8px;
    border: none;
    border-radius: 2px;
    color: #fff;
    font-family: Lato, sans-serif;
    font-size: 11px;
    font-weight: 700;
}
.act svg {
    margin: -2px 14px 0 0;
}
.act-save {
    width: 109px;
    background: #0b8656;
}
.act-cancel {
    width: 107px;
    background: #e04b38;
}

/* Scrollbar */
.scrollbar {
    display: flex;
    flex-direction: column;
    align-items: center;
    flex: 0 0 14px;
    padding: 6px 0;
    background: #f1f1f1;
    fill: #999;
}
.sb-up {
    transform: rotate(180deg);
}
.sb-thumb {
    width: 12px;
    height: 596px;
    margin: 4px 0 9px;
    background: #bdbdbd;
}

/* Launcher */
.dock {
    display: flex;
    align-items: center;
    flex: 0 0 40px;
    padding: 1px 8px 0 3px;
    background: #2f1650;
}
.dk {
    display: flex;
    align-items: center;
    justify-content: center;
    position: relative;
    width: 35px;
    height: 39px;
}
.dk-run::after {
    content: "";
    position: absolute;
    bottom: 0;
    left: 16px;
    width: 3px;
    height: 3px;
    background: #ddd;
}
.dk-top::before {
    content: "";
    position: absolute;
    top: -1px;
    left: 16px;
    width: 3px;
    height: 3px;
    background: #ddd;
}
.dk-trash {
    margin-left: auto;
}
.dk-term {
    fill: #eceff1;
    font-family: "DejaVu Sans Mono", monospace;
    font-size: 8px;
    font-weight: 700;
}
.dk-a {
    fill: #fff;
    font-family: "Liberation Sans", sans-serif;
    font-size: 17px;
    text-anchor: middle;
}
.dk-s {
    fill: #f39c12;
    font-family: "Liberation Sans", sans-serif;
    font-size: 15px;
    text-anchor: middle;
}
```
